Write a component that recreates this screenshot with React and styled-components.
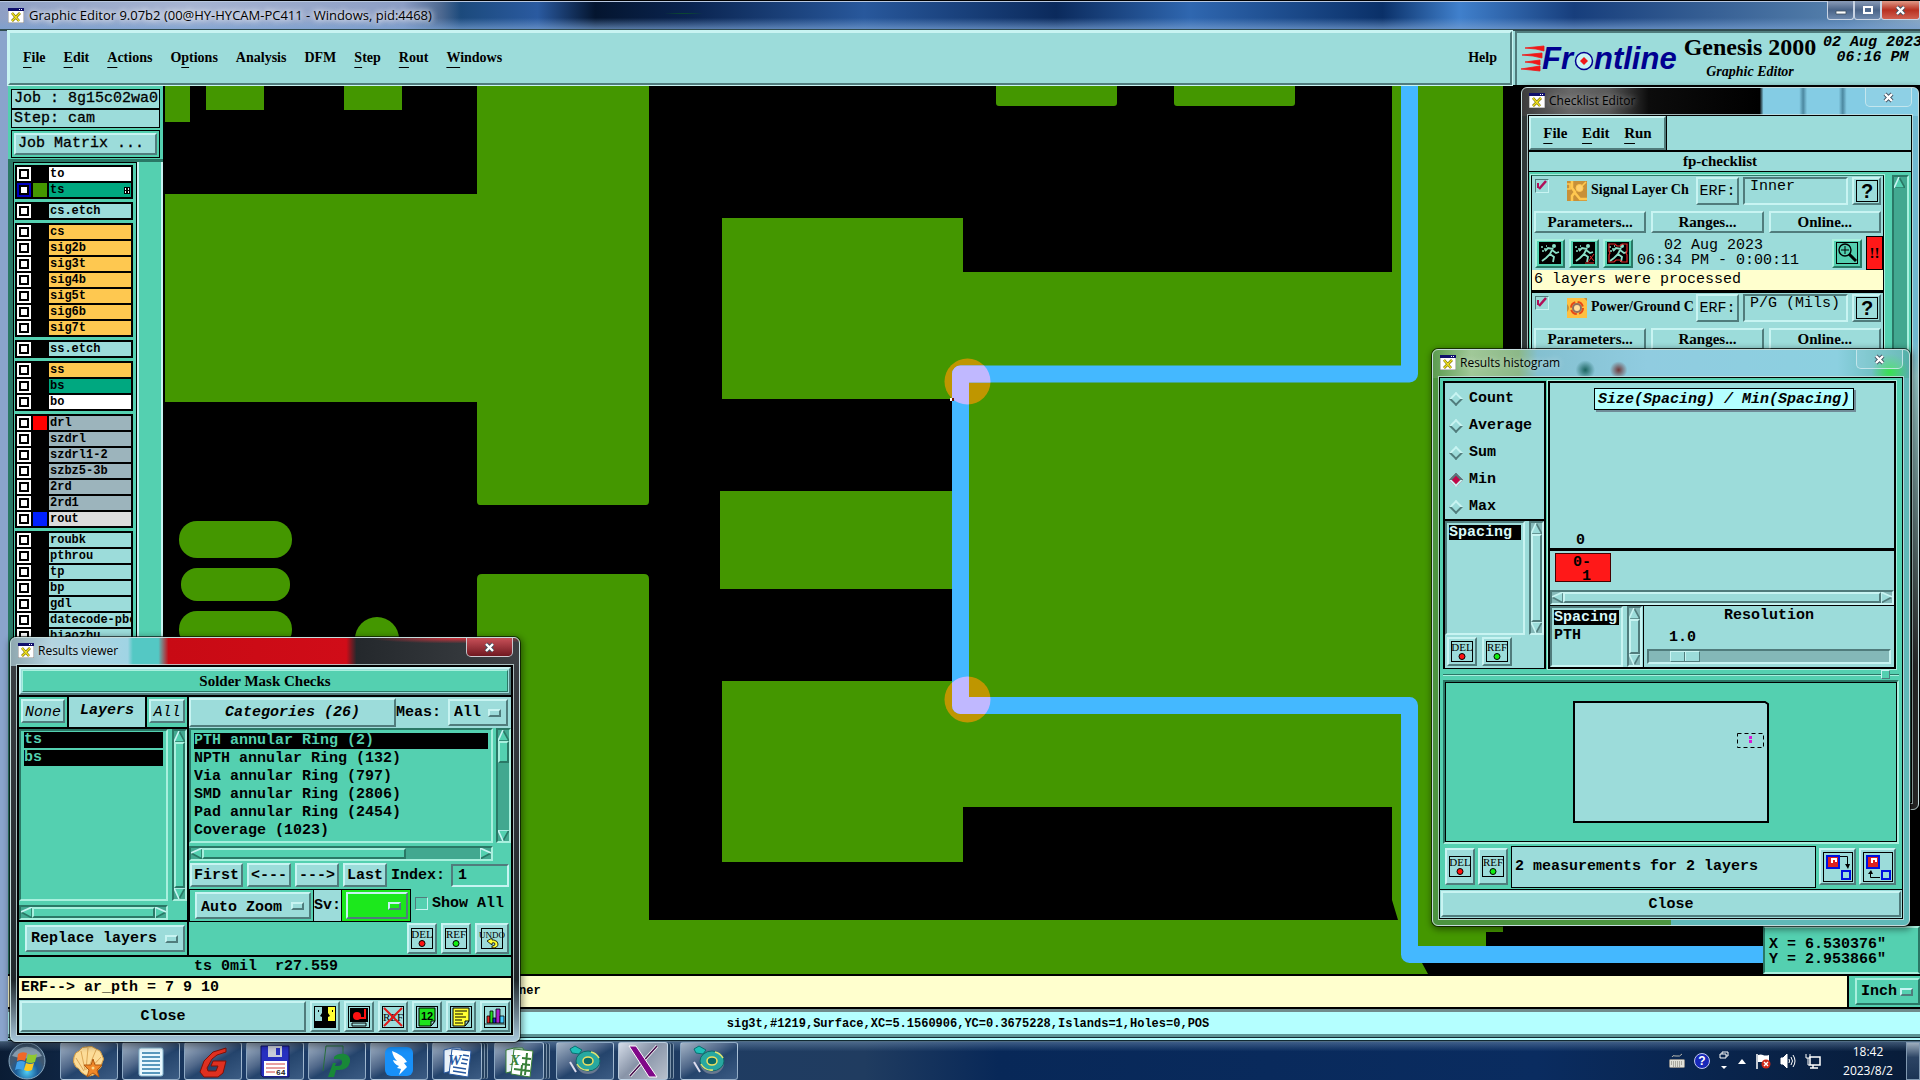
import { useState } from "react";
import styled, { createGlobalStyle, css } from "styled-components";

const GlobalStyle = createGlobalStyle`
  *,
  *::after {
    box-sizing: border-box;
  }

  body {
    margin: 0;
    color: #000;
    overflow: hidden;
    background: #000;
    font-family: "Liberation Mono", monospace;
    font-size: 15px;
  }

  button,
  input,
  select {
    margin: 0;
    padding: 0;
    color: inherit;
    font: inherit;
    border-radius: 0;
  }

  ul {
    margin: 0;
    padding: 0;
    list-style: none;
  }

  svg {
    display: block;
    flex: none;
  }
`;

const pale = "#9cdcda";
const teal = "#54d0b0";
const serif = `"Liberation Serif", serif`;
const ui = `"Open Sans", sans-serif`;

const raised = css`
  border: 2px solid;
  border-color: ${(p) =>
    p.$teal ? "#a8f0de #2a7866 #2a7866 #a8f0de" : "#c8f4f2 #507c7c #507c7c #c8f4f2"};
`;

const sunken = css`
  border: 2px solid;
  border-color: ${(p) =>
    p.$teal ? "#2a7866 #a8f0de #a8f0de #2a7866" : "#507c7c #c8f4f2 #c8f4f2 #507c7c"};
`;

/* ---------- page frame ---------- */

const Desktop = styled.div`
  height: 100vh;
  display: flex;
  flex-direction: column;
  position: relative;
  overflow: hidden;
`;

const MainTitle = styled.header`
  height: 31px;
  flex: none;
  display: flex;
  align-items: center;
  gap: 5px;
  padding-left: 8px;
  border-top: 1px solid #000;
  border-bottom: 2px solid #304c50;
  font: 13px ${ui};
  box-shadow: inset 0 1px #b8c8e0;
  background:
    radial-gradient(ellipse at 73% 50%, #6f2d5a 0, transparent 2%),
    radial-gradient(ellipse at 35.600% 45%, #0c5c20 0, transparent 1.200%),
    radial-gradient(ellipse at 39% 50%, #0c4c30 0, transparent 1.200%),
    linear-gradient(to bottom, transparent 60%, rgba(120, 160, 210, 0.7)),
    linear-gradient(
      to right,
      #8fa0c4 0,
      #a6b4d2 10%,
      #8b9dc4 21%,
      #4c6890 23%,
      #1c4a7c 24%,
      #2a5aa0 28%,
      #04152f 31%,
      #0a2450 36%,
      #28589c 45%,
      #0b2a5c 55%,
      #2f67b0 62%,
      #0a3068 72%,
      #4080cc 76%,
      #173e7c 82%,
      #5580ac 96%,
      #8aa8c0
    );
`;

const TitleText = styled.h1`
  margin: 0;
  flex: 1;
  font: inherit;
  text-shadow: 0 0 6px #fff, 0 0 6px #fff;
`;

const WinControls = styled.div`
  display: flex;
  align-self: flex-start;
`;

const WinControl = styled.button`
  width: ${(p) => (p.$close ? "39px" : "27px")};
  height: 19px;
  display: grid;
  place-items: center;
  border: 1px solid #c8d4e4;
  border-top: 0;
  border-radius: 0 0 3px 3px;
  background: ${(p) =>
    p.$close
      ? "linear-gradient(#e09a88, #b83020 50%, #d06050)"
      : "linear-gradient(#8a9cb8, #4a6488 50%, #6c88ac)"};
`;

const AppArea = styled.main`
  flex: 1;
  min-height: 0;
  display: flex;
  flex-direction: column;
  border-left: 8px solid #8aa4cc;
`;

const Header = styled.div`
  height: 55px;
  flex: none;
  display: flex;
  background: ${pale};
  border-bottom: 1px solid #000;
`;

const MenuBar = styled.nav`
  flex: 1;
  display: flex;
  align-items: center;
  gap: 18px;
  padding: 0 13px;
  font: bold 14px ${serif};
  border: 2px solid;
  border-color: #c8f4f2 #507c7c #507c7c #c8f4f2;
  box-shadow: 0 0 0 1px #c8f4f2;
`;

const MenuItem = styled.button`
  border: 0;
  background: none;
  margin-left: ${(p) => (p.$end ? "auto" : "0")};

  u {
    text-underline-offset: 5px;
  }
`;

const Brand = styled.div`
  width: 405px;
  flex: none;
  display: flex;
  margin-left: 3px;
  padding-left: 4px;
  overflow: hidden;
  border-top: 2px solid #507c7c;
  border-left: 2px solid #507c7c;
`;

const BrandName = styled.div`
  width: 138px;
  flex: none;
  text-align: center;
  white-space: nowrap;
`;

const Product = styled.div`
  font: bold 24px/28px ${serif};
`;

const ProductPart = styled.div`
  font: italic bold 14px/22px ${serif};
`;

const BrandDate = styled.div`
  flex: none;
  padding: 2px 0 0 4px;
  font-style: italic;
  font-weight: bold;
  line-height: 15px;
  text-align: center;
  white-space: nowrap;
`;

const Middle = styled.div`
  flex: 1;
  min-height: 0;
  display: flex;
`;

/* ---------- layer sidebar ---------- */

const Sidebar = styled.aside`
  width: 157px;
  flex: none;
  display: flex;
  flex-direction: column;
  padding: 3px 3px 0;
  background: ${teal};
  border-right: 2px solid #000;
  overflow: hidden;
`;

const JobLine = styled.div`
  height: ${(p) => (p.$gap ? "19px" : "20px")};
  flex: none;
  padding-left: 2px;
  line-height: 17px;
  white-space: nowrap;
  background: ${pale};
  border: 1px solid #000;
  -webkit-text-stroke: 0.3px #000;
`;

const MatrixBox = styled.div`
  flex: none;
  margin: 2px 0 1px;
  padding: 2px;
  border: 1px solid #000;
`;

const MatrixButton = styled.button`
  ${raised}
  width: 100%;
  height: 22px;
  padding-left: 2px;
  text-align: left;
  line-height: 16px;
  background: ${pale};
  -webkit-text-stroke: 0.3px #000;
`;

const LayerWell = styled.div`
  flex: 1;
  min-height: 0;
  display: flex;
  margin: 0 -3px;
  overflow: hidden;
  border-top: 3px solid #2a7866;
  border-left: 5px solid #2a7866;
`;

const LayerList = styled.div`
  width: 124px;
  flex: none;
  display: flex;
  flex-direction: column;
  gap: 3px;
  padding: 2px 3px 0 1px;
  border: 1px solid #000;
  border-bottom: 0;
`;

const LayerTrack = styled.div`
  flex: 1;
  border-left: 2px solid #c8f4f2;
  border-right: 2px solid #c8f4f2;
`;

const LayerGroup = styled.ul`
  flex: none;
  display: flex;
  flex-direction: column;
  gap: 2px;
  padding: 2px;
  background: #000;
`;

const LayerRow = styled.li`
  display: flex;
  gap: 2px;
  height: 14px;
`;

const LayerTick = styled.input`
  appearance: none;
  width: 14px;
  height: 14px;
  flex: none;
  border: 2px solid ${(p) => (p.$active ? "#0000c0" : "#fff")};
  background: #fff;
  box-shadow: inset 0 0 0 2px #000;
`;

const LayerSwatch = styled.span`
  width: 14px;
  flex: none;
  background: ${(p) => p.$color || "#000"};
`;

const LayerName = styled.label`
  flex: 1;
  padding-left: 1px;
  overflow: hidden;
  display: flex;
  justify-content: space-between;
  align-items: center;
  font-size: 12px;
  font-weight: bold;
  line-height: 14px;
  white-space: nowrap;
  background: ${(p) => p.$bg};
`;

/* ---------- drawing area ---------- */

const Canvas = styled.section`
  flex: 1;
  min-width: 0;
  position: relative;
  overflow: hidden;
  background: #000;
`;

const Coordinates = styled.div`
  position: absolute;
  right: 0;
  bottom: 0;
  width: 157px;
  padding: 9px 4px 5px;
  font-weight: bold;
  line-height: 15px;
  white-space: pre;
  background: ${teal};
  border: 2px solid;
  border-color: #a8f0de #2a7866 #a8f0de #2a7866;
`;

const PromptRow = styled.div`
  height: 35px;
  flex: none;
  display: flex;
  gap: 2px;
  background: #000;
  border-top: 2px solid #000;
  border-bottom: 2px solid #000;
`;

const Prompt = styled.div`
  flex: 1;
  padding-left: 511px;
  font-size: 12px;
  font-weight: bold;
  line-height: 31px;
  background: #ffffce;
`;

const UnitBox = styled.div`
  width: 71px;
  flex: none;
  padding: 2px 0 2px 6px;
  background: ${teal};
`;

const StatusLine = styled.footer`
  height: 32px;
  flex: none;
  padding-left: 8px;
  font-size: 12px;
  font-weight: bold;
  line-height: 25px;
  text-align: center;
  background: #b4ffff;
  border-top: 3px solid #708c8c;
  border-bottom: 4px double #102830;
  box-shadow: inset 0 -3px #5c9494;
`;

/* ---------- floating windows ---------- */

const Frame = styled.section`
  position: absolute;
  top: ${(p) => p.$top};
  left: ${(p) => p.$left};
  right: ${(p) => p.$right};
  width: ${(p) => p.$width};
  padding: 0 6px 6px;
  border: 1px solid #c4dcdc;
  border-radius: 6px;
  box-shadow: 0 0 0 1px rgba(0, 0, 0, 0.6), 1px 2px 6px 2px rgba(0, 0, 0, 0.4);
  background: ${(p) => p.$glass};
`;

const FrameTitle = styled.header`
  height: 27px;
  display: flex;
  align-items: center;
  gap: 4px;
  padding: 0 0 2px 1px;
  font: 12px ${ui};
`;

const FrameName = styled.h2`
  margin: 0;
  flex: 1;
  font: inherit;
  text-shadow: 0 0 6px rgba(255, 255, 255, 0.6);
`;

const FrameClose = styled.button`
  width: 47px;
  height: 19px;
  align-self: flex-start;
  display: grid;
  place-items: center;
  border: 1px solid rgba(210, 235, 240, 0.8);
  border-top: 0;
  border-radius: 0 0 5px 5px;
  background: ${(p) => (p.$hot ? "linear-gradient(#c85058, #701820)" : "rgba(170, 220, 230, 0.25)")};
`;

const FrameBody = styled.div`
  display: flex;
  flex-direction: column;
  gap: ${(p) => p.$gap || "0"};
  padding: ${(p) => p.$pad || "1px"};
  background: ${(p) => p.$bg || "#000"};
  border: 1px solid #000;
  outline: 1px solid rgba(200, 225, 225, 0.8);
`;

/* ---------- shared controls ---------- */

const PushButton = styled.button`
  ${raised}
  height: ${(p) => p.$h || "24px"};
  width: ${(p) => p.$w || "auto"};
  flex: ${(p) => (p.$grow ? "1" : "none")};
  overflow: hidden;
  white-space: nowrap;
  font-family: ${(p) => (p.$serif ? serif : "inherit")};
  font-weight: ${(p) => (p.$light ? "normal" : "bold")};
  font-style: ${(p) => (p.$italic ? "italic" : "normal")};
  background: ${pale};
`;

const IconButton = styled.button`
  ${raised}
  width: ${(p) => p.$w || "30px"};
  height: ${(p) => p.$h || "31px"};
  flex: none;
  display: grid;
  place-items: center;
  background: ${(p) => (p.$teal ? teal : pale)};
`;

const OptionBox = styled.div`
  ${raised}
  position: relative;
  width: ${(p) => p.$w || "auto"};
  height: ${(p) => p.$h || "27px"};
  background: ${(p) => p.$bg || pale};

  &::after {
    content: "";
    position: absolute;
    right: 5px;
    top: calc(50% - 4px);
    width: 13px;
    height: 8px;
    border: 2px solid;
    border-color: #c8f4f2 #507c7c #507c7c #c8f4f2;
    pointer-events: none;
  }
`;

const OptionSelect = styled.select`
  appearance: none;
  width: 100%;
  height: 100%;
  padding-left: 4px;
  font-weight: bold;
  border: 0;
  background: transparent;
`;

const Well = styled.div`
  ${sunken}
  flex: 1;
  min-width: 0;
  padding: ${(p) => p.$pad || "2px 3px"};
  overflow: hidden;
`;

const ListItem = styled.li`
  height: ${(p) => (p.$tight ? "15px" : "16px")};
  margin-bottom: ${(p) => (p.$tight ? "3px" : "2px")};
  font-weight: bold;
  line-height: 16px;
  white-space: nowrap;
  overflow: hidden;
  color: ${(p) => (p.$on ? (p.$teal ? teal : "#d8f8f8") : "#000")};
  background: ${(p) => (p.$on ? "#000" : "none")};
`;

const Bar = styled.div`
  ${sunken}
  flex: none;
  display: flex;
  flex-direction: ${(p) => (p.$horizontal ? "row" : "column")};
  width: ${(p) => (p.$horizontal ? "auto" : "15px")};
  height: ${(p) => (p.$horizontal ? "15px" : "auto")};
  background: ${(p) => (p.$teal ? "#42a890" : "#84b8b8")};
`;

const BarArrow = styled.button`
  width: 11px;
  height: 11px;
  flex: none;
  border: 0;
  background: none;
`;

const BarSpace = styled.div`
  flex: 1;
  display: flex;
  flex-direction: inherit;
`;

const BarThumb = styled.div`
  ${raised}
  flex: 0 0 ${(p) => p.$size};
  background: ${(p) => (p.$teal ? teal : pale)};
`;

const arrows = {
  up: ["M5 0L0 11H11Z", "M5 0L0 11", "M5 0L11 11H0"],
  down: ["M0 0H11L5 11Z", "M5 11L0 0H11", "M5 11L11 0"],
  left: ["M0 5L11 0V11Z", "M0 5L11 0", "M0 5L11 11V0"],
  right: ["M0 0L11 5L0 11Z", "M0 11V0L11 5", "M0 11L11 5"],
};

const Arrow = ({ dir, isTeal }) => (
  <BarArrow aria-label={dir}>
    <svg width="11" height="11" viewBox="0 0 11 11" fill="none" strokeWidth="1.6">
      <path d={arrows[dir][0]} fill={isTeal ? teal : pale} />
      <path d={arrows[dir][2]} stroke={isTeal ? "#2a7866" : "#507c7c"} />
      <path d={arrows[dir][1]} stroke="#c8f4f2" />
    </svg>
  </BarArrow>
);

const ScrollBar = ({ horizontal, isTeal, size = "100%" }) => (
  <Bar $horizontal={horizontal} $teal={isTeal}>
    <Arrow dir={horizontal ? "left" : "up"} isTeal={isTeal} />
    <BarSpace>
      <BarThumb $size={size} $teal={isTeal} />
    </BarSpace>
    <Arrow dir={horizontal ? "right" : "down"} isTeal={isTeal} />
  </Bar>
);

/* ---------- icons ---------- */

const XIcon = () => (
  <svg width="16" height="15" viewBox="0 0 16 15">
    <path d="M0 0h16v15H0z" fill="#fff" stroke="#888" />
    <path d="M0 0h16v3H0z" fill="#10106c" />
    <path d="M11 1h1v1h-1zM13 1h1v1h-1z" fill="#fff" />
    <path d="M4 5l7 8M12 5l-8 8" stroke="#706800" strokeWidth="2.6" />
    <path d="M4 5l7 8M12 5l-8 8" stroke="#f0e020" strokeWidth="1.4" />
  </svg>
);

const CrossGlyph = () => (
  <svg width="13" height="11" viewBox="0 0 13 11">
    <path d="M3 2l7 7M10 2l-7 7" stroke="#405060" strokeWidth="4" />
    <path d="M3 2l7 7M10 2l-7 7" stroke="#fff" strokeWidth="2.4" />
  </svg>
);

const TagIcon = ({ label, color, undo }) => (
  <svg width={undo ? 26 : 24} height="23" viewBox={undo ? "-1 0 26 23" : "0 0 24 23"}>
    <rect x="1.5" y="1.5" width="21" height="20" fill="none" stroke="#000" />
    <text
      x="12"
      y="11"
      textAnchor="middle"
      fontFamily="Liberation Serif"
      fontSize={undo ? 9 : 11}
    >
      {label}
    </text>
    {undo ? (
      <path
        d="M7 14l5-3v2h2q4 1 4 4 0 4-6 4v-2q3 0 3-2t-3-1v2z"
        fill="#ff3"
        stroke="#000"
        strokeWidth="0.8"
      />
    ) : (
      <circle cx="12" cy="16.5" r="3" fill={color} stroke="#000" />
    )}
  </svg>
);

const ToolFrame = ({ children }) => (
  <svg width="24" height="24" viewBox="0 0 24 24">
    {children}
    <rect x="1.5" y="1.5" width="21" height="21" fill="none" stroke="#000" />
  </svg>
);

const FacesIcon = () => (
  <ToolFrame>
    <path d="M12 2h10v20H12z" fill="#ff3" />
    <path d="M9 2h6v6l2 3-2 1v4h7v6H2v-6h7v-4l-2-1 2-3z" />
    <path d="M5 5h1v2H5zM19 5h1v2h-1z" />
  </ToolFrame>
);

const DiskIcon = () => (
  <ToolFrame>
    <path d="M3 3h18v14H3z" />
    <circle cx="10" cy="11" r="4" fill="#f11" />
    <path d="M10 13h8V4" fill="none" stroke="#f11" strokeWidth="2" />
    <path d="M5 18h14v3H5z" fill={pale} stroke="#000" />
  </ToolFrame>
);

const NoRefIcon = () => (
  <ToolFrame>
    <text x="12" y="16" textAnchor="middle" fontFamily="Liberation Serif" fontSize="11">
      REF
    </text>
    <path d="M3 3l18 18M21 3L3 21" stroke="#e01818" strokeWidth="2" />
  </ToolFrame>
);

const NumberIcon = () => (
  <ToolFrame>
    <path d="M4 3h16v13l-4 5H4z" fill="#1de41d" stroke="#000" />
    <path d="M20 16h-4v5z" fill={pale} stroke="#000" />
    <text x="12" y="15" textAnchor="middle" fontFamily="Liberation Sans" fontWeight="bold" fontSize="11">
      12
    </text>
  </ToolFrame>
);

const NoteIcon = () => (
  <ToolFrame>
    <path d="M4 3h16v13l-4 5H4z" fill="#ff3" stroke="#000" />
    <path d="M20 16h-4v5z" fill={pale} stroke="#000" />
    <path d="M6 6h12M6 9h8M6 12h11M6 15h7M6 18h8" stroke="#000" />
  </ToolFrame>
);

const ChartIcon = () => (
  <ToolFrame>
    <g stroke="#000" strokeWidth="0.8">
      <path d="M4 11h3v7H4z" fill="#e22" />
      <path d="M7 6h3v12H7z" fill="#2d2" />
      <path d="M10 13h3v5h-3z" fill="#22d" />
      <path d="M13 4h4v14h-4z" fill="#a2c" />
      <path d="M17 11h4v7h-4z" fill="#4cf" />
      <path d="M2 19h20" />
    </g>
  </ToolFrame>
);

const RunnerIcon = ({ slash, boxed }) => (
  <svg width="24" height="24" viewBox="0 0 24 24" fill="none">
    <path d="M1 1h22v22H1z" fill="#000" />
    <circle cx="16" cy="5" r="2" fill="#8ae0c8" />
    <path
      d="M15 7l-3 6 4 3-1 5M12 13l-4 4-4 3M15 8l-5-1-3 3M14 9l4 3 3-1"
      stroke="#8ae0c8"
      strokeWidth="1.8"
    />
    <path d="M3 6h2M6 8h2M4 10h2M8 5h1" stroke="#8ae0c8" strokeWidth="1.4" />
    {slash && <path d="M22 13l-6 8M18 15l4 5M13 22h9" stroke="#e02828" />}
    {boxed && (
      <path d="M3 3h6l2 2h3l2-2h5v7l-1 2 1 2v7h-5l-2-2h-4l-2 2H3v-7l1-2-1-2z" stroke="#e02828" strokeWidth="1.2" />
    )}
  </svg>
);

const LensIcon = () => (
  <svg width="24" height="24" viewBox="0 0 24 24" fill="none" stroke="#000">
    <rect x="1.5" y="1.5" width="21" height="21" />
    <circle cx="10" cy="9" r="6" strokeWidth="1.4" />
    <path d="M6 9h8M10 5v8" />
    <path d="M14 13l7 7" strokeWidth="3" />
  </svg>
);

const HelpMark = () => (
  <svg width="24" height="24" viewBox="0 0 24 24">
    <rect x="1.5" y="1.5" width="21" height="21" fill="none" stroke="#000" />
    <text x="12" y="19" textAnchor="middle" fontFamily="Liberation Sans" fontWeight="bold" fontSize="20">
      ?
    </text>
  </svg>
);

const SignalIcon = () => (
  <svg width="20" height="20" viewBox="0 0 20 20" fill="none" stroke="#ffc850">
    <path d="M0 0h20v20H0z" fill="#c89038" stroke="none" />
    <path d="M5 0v7l3 4-3 4v5M20 18H13l-5-6" strokeWidth="2.5" />
    <circle cx="12.5" cy="7" r="3.5" fill="#ffd070" />
    <path d="M15 5l4-4M0 3h3v5H0" strokeWidth="1.6" />
  </svg>
);

const PowerIcon = () => (
  <svg width="20" height="20" viewBox="0 0 20 20" fill="none">
    <path d="M0 0h20v20H0z" fill="#ffc040" />
    <circle cx="10" cy="10" r="6" stroke="#e84818" strokeWidth="2" strokeDasharray="7 2.4" />
    <circle cx="10" cy="10" r="4" fill="#ffe0a0" stroke="#907060" strokeWidth="2" />
    <path d="M0 6q4 4 0 8zM20 0h-3l3 3z" fill="#c89038" />
  </svg>
);

const SwapIcon = ({ back }) => (
  <svg width="32" height="32" viewBox="0 0 32 32" fill="none">
    <rect x="1.5" y="1.5" width="29" height="29" stroke="#000" />
    <rect x="5" y="5" width="12" height="12" fill="#e02020" stroke="#0010e0" strokeWidth="2" />
    <path d="M7 7h2v5h2V9h2v2h2V7z" fill="#fff" />
    <rect x="20" y="20" width="8" height="8" stroke="#0010e0" strokeWidth="2" />
    {back ? (
      <path d="M18 26.5H8.5V22" stroke="#000" />
    ) : (
      <path d="M18 5.5h7.5V14" stroke="#000" />
    )}
    <path d={back ? "M6 23h5l-2-4z" : "M23 13h5l-2 5z"} fill="#000" />
  </svg>
);

const Logo = () => (
  <svg width="160" height="50" viewBox="0 0 160 50">
    <path
      d="M4 15L23 13V18L15 16zM1 22L21 20V25L12 23zM4 29L19 27V32L12 30zM0 36L19 33V38L10 37z"
      fill="#f01818"
      stroke="#f01818"
      strokeWidth="0.8"
    />
    <g
      fill="#000090"
      fontFamily="Liberation Sans"
      fontWeight="bold"
      fontStyle="italic"
      fontSize="31"
    >
      <text x="21" y="36">
        Fr
      </text>
      <text x="73" y="36">
        ntline
      </text>
    </g>
    <circle cx="63" cy="28" r="8.5" fill="#c8f4f2" stroke="#000090" strokeWidth="1.5" />
    <path d="M63 24l4 4-4 4-4-4z" fill="#f01818" />
  </svg>
);

/* ---------- board drawing ---------- */

const tracePath = "M1409.5 80V374H960.5V705.5H1409.5V954.5H1780";

const Board = () => (
  <svg width="100%" height="100%" aria-label="Board layout">
    <defs>
      <clipPath id="marks">
        <circle cx="967.5" cy="381.5" r="23" />
        <circle cx="967.5" cy="699.5" r="23" />
      </clipPath>
    </defs>
    <g transform="translate(-165 -86)">
      <g fill="#449700">
        <path d="M165 86h25v36h-25zM206 86h58v24h-58zM344 86h58v24h-58z" />
        <path d="M165 194h312V86h172v415q0 4-3 4H480q-3 0-3-4V402H165z" />
        <path d="M477 579q0-5 5-5h162q5 0 5 5v341h749l-6-20V807H963v55H722V681h230v-92H720v-98h232v-92H722V218h241v54h429V86h111v846h-17v14h-64v17l6 11H477z" />
        <path d="M996 86h121v17q0 3-3 3H999q-3 0-3-3zM1174 86h121v17q0 3-3 3h-115q-3 0-3-3z" />
        <rect x="179" y="521" width="113" height="37" rx="18" />
        <rect x="181" y="568" width="109" height="33" rx="16" />
        <rect x="179" y="611" width="113" height="37" rx="18" />
        <circle cx="377" cy="639" r="22" />
      </g>
      <circle cx="967.5" cy="381.5" r="23" fill="#bf9600" />
      <circle cx="967.5" cy="699.5" r="23" fill="#bf9600" />
      <g fill="none" strokeWidth="17" strokeLinejoin="round">
        <path d={tracePath} stroke="#44b8ff" />
        <path d={tracePath} stroke="#c0b8ff" clipPath="url(#marks)" />
      </g>
      <path d="M950 398h2v3h-2z" fill="#fff" />
      <path d="M952 398h2v3h-2z" fill="#701800" />
    </g>
  </svg>
);

/* ---------- results viewer ---------- */

const Banner = styled.div`
  ${raised}
  height: 28px;
  padding: 1px;
  background: ${pale};

  h3 {
    margin: 0;
    height: 100%;
    font: bold 15px/20px ${serif};
    text-align: center;
    background: ${teal};
    border: 1px solid;
    border-color: #a8f0de #2a7866 #2a7866 #a8f0de;
  }
`;

const Split = styled.div`
  display: flex;
  gap: 2px;
  height: 258px;
`;

const LayerColumn = styled.div`
  width: 168px;
  flex: none;
  display: flex;
  flex-direction: column;
  gap: 2px;
`;

const TabStrip = styled.div`
  display: flex;
  gap: 2px;
`;

const TabCell = styled.div`
  flex: ${(p) => (p.$grow ? "1" : "none")};
  padding: 2px;
  background: ${(p) => (p.$grow ? pale : teal)};
  font-weight: bold;
  font-style: italic;
  line-height: 24px;
  text-align: center;
`;

const ListPane = styled.div`
  flex: 1;
  min-height: 0;
  display: grid;
  grid-template-columns: minmax(0, 1fr) 15px;
  grid-template-rows: minmax(0, 1fr) 15px;
  gap: 4px;
  background: ${teal};
`;

const ReplaceBox = styled.div`
  padding: 3px 2px 3px 6px;
  background: ${teal};
`;

const CategoryColumn = styled.div`
  flex: 1;
  min-width: 0;
  display: flex;
  flex-direction: column;
  background: ${teal};
`;

const CategoryHead = styled.div`
  height: 31px;
  display: flex;
  align-items: center;
  font-weight: bold;
  background: ${pale};
`;

const HeadLabel = styled.label`
  width: 52px;
`;

const CategoryPane = styled(ListPane)`
  flex: none;
  height: 133px;
  gap: 3px;
`;

const NavRow = styled.div`
  height: 28px;
  display: flex;
  align-items: center;
  gap: 4px;
  padding: 0 2px 0 1px;
  font-weight: bold;
`;

const IndexInput = styled.input`
  ${sunken}
  flex: 1;
  min-width: 0;
  height: 23px;
  margin-left: 2px;
  padding-left: 5px;
  background: ${teal};
`;

const ZoomRow = styled.div`
  display: flex;
  align-items: center;
  gap: 4px;
  font-weight: bold;
`;

const ZoomBox = styled.div`
  display: flex;
  gap: 1px;
  border: 1px solid #000;
  background: #000;
`;

const ZoomCell = styled.div`
  padding: ${(p) => p.$pad || "2px"};
  line-height: 27px;
  background: ${(p) => p.$bg};
`;

const ShowAll = styled.label`
  display: flex;
  align-items: center;
  gap: 4px;
  margin-bottom: 4px;

  input {
    ${sunken}
    appearance: none;
    width: 13px;
    height: 13px;
    border-width: 1px;
    background: ${teal};
  }
`;

const ToolRow = styled.div`
  flex: 1;
  display: flex;
  justify-content: flex-end;
  align-items: center;
  gap: 4px;
  padding-right: 2px;
`;

const InfoLine = styled.div`
  height: ${(p) => (p.$warm ? "20px" : "19px")};
  padding-left: 2px;
  font-weight: ${(p) => (p.$light ? "normal" : "bold")};
  line-height: 19px;
  text-align: ${(p) => (p.$warm ? "left" : "center")};
  white-space: pre;
  background: ${(p) => (p.$warm ? "#ffffce" : teal)};
`;

const CloseRow = styled.div`
  display: flex;
  gap: 4px;
  padding: 1px;
  background: ${pale};
`;

const categories = [
  "PTH annular Ring (2)",
  "NPTH annular Ring (132)",
  "Via annular Ring (797)",
  "SMD annular Ring (2806)",
  "Pad annular Ring (2454)",
  "Coverage (1023)",
];

const viewerGlass = `
  radial-gradient(ellipse at 88% 0, rgba(230, 50, 60, 0.9) 0, transparent 14%) 0 0 / 100% 28px no-repeat,
  linear-gradient(to right, #8fa8b0 0, #b4d4e0 8%, #a0d4e4 23%, #54c8c4 24%, #54c8c4 29%, #c80a14 31%, #d00c18 66%, #24282c 68%, #3c4044 100%) 0 0 / 100% 28px no-repeat,
  linear-gradient(#3c4044, #20282c 85%, #a8c8dc)
`;

const ResultsViewer = () => {
  const [selected, setSelected] = useState(0);

  return (
    <Frame $top="637px" $left="10px" $width="510px" $glass={viewerGlass}>
      <FrameTitle>
        <XIcon />
        <FrameName>Results viewer</FrameName>
        <FrameClose $hot aria-label="Close window">
          <CrossGlyph />
        </FrameClose>
      </FrameTitle>
      <FrameBody $gap="2px">
        <Banner>
          <h3>Solder Mask Checks</h3>
        </Banner>
        <Split>
          <LayerColumn>
            <TabStrip>
              <TabCell>
                <PushButton $italic $light $w="44px">
                  None
                </PushButton>
              </TabCell>
              <TabCell $grow>Layers</TabCell>
              <TabCell>
                <PushButton $italic $light $w="36px">
                  All
                </PushButton>
              </TabCell>
            </TabStrip>
            <ListPane>
              <Well $teal $pad="1px 3px">
                <ul>
                  <ListItem $on $teal>ts</ListItem>
                  <ListItem $on $teal>bs</ListItem>
                </ul>
              </Well>
              <ScrollBar isTeal />
              <ScrollBar horizontal isTeal />
            </ListPane>
            <ReplaceBox>
              <OptionBox>
                <OptionSelect aria-label="Layer mode">
                  <option>Replace layers</option>
                </OptionSelect>
              </OptionBox>
            </ReplaceBox>
          </LayerColumn>
          <CategoryColumn>
            <CategoryHead>
              <PushButton $italic $w="207px" $h="29px">
                Categories (26)
              </PushButton>
              <HeadLabel htmlFor="meas">Meas:</HeadLabel>
              <OptionBox $w="60px">
                <OptionSelect id="meas">
                  <option>All</option>
                </OptionSelect>
              </OptionBox>
            </CategoryHead>
            <CategoryPane>
              <Well $teal $pad="3px">
                <ul>
                  {categories.map((name, index) => (
                    <ListItem
                      key={name}
                      $teal
                      $on={index === selected}
                      onClick={() => setSelected(index)}
                    >
                      {name}
                    </ListItem>
                  ))}
                </ul>
              </Well>
              <ScrollBar isTeal size="22px" />
              <ScrollBar horizontal isTeal size="204px" />
            </CategoryPane>
            <NavRow>
              <PushButton $w="53px">First</PushButton>
              <PushButton $w="44px">&lt;---</PushButton>
              <PushButton $w="44px">---&gt;</PushButton>
              <PushButton $w="44px">Last</PushButton>
              <label htmlFor="index">Index:</label>
              <IndexInput id="index" defaultValue="1" />
            </NavRow>
            <ZoomRow>
              <ZoomBox>
                <ZoomCell $bg={teal} $pad="2px 2px 2px 5px">
                  <OptionBox $w="116px">
                    <OptionSelect aria-label="Zoom mode">
                      <option>Auto Zoom</option>
                    </OptionSelect>
                  </OptionBox>
                </ZoomCell>
                <ZoomCell $bg={pale} $pad="2px 0">
                  <label htmlFor="sv">Sv:</label>
                </ZoomCell>
                <ZoomCell $bg="#1ce81c" $pad="2px 2px 2px 4px">
                  <OptionBox $w="62px" $bg="#1ce81c">
                    <OptionSelect id="sv">
                      <option aria-label="green" />
                    </OptionSelect>
                  </OptionBox>
                </ZoomCell>
              </ZoomBox>
              <ShowAll>
                <input type="checkbox" />
                Show All
              </ShowAll>
            </ZoomRow>
            <ToolRow>
              <IconButton>
                <TagIcon label="DEL" color="#f11" />
              </IconButton>
              <IconButton>
                <TagIcon label="REF" color="#1e1" />
              </IconButton>
              <IconButton $w="34px">
                <TagIcon label="UNDO" undo />
              </IconButton>
            </ToolRow>
          </CategoryColumn>
        </Split>
        <InfoLine>{"ts 0mil  r27.559"}</InfoLine>
        <InfoLine $warm>{"ERF--> ar_pth = 7 9 10"}</InfoLine>
        <CloseRow>
          <PushButton $grow $h="31px">
            Close
          </PushButton>
          {[FacesIcon, DiskIcon, NoRefIcon, NumberIcon, NoteIcon, ChartIcon].map((Icon, index) => (
            <IconButton key={index}>
              <Icon />
            </IconButton>
          ))}
        </CloseRow>
      </FrameBody>
    </Frame>
  );
};

/* ---------- checklist editor ---------- */

const ChecklistMenu = styled.nav`
  height: 36px;
  border-bottom: 2px solid #000;
`;

const ChecklistMenuBox = styled.div`
  ${raised}
  width: 137px;
  height: 34px;
  display: flex;
  align-items: center;
  justify-content: space-around;
  padding: 0 5px;
  font: bold 15px ${serif};
  box-shadow: 1px 0 #000;
`;

const ChecklistName = styled.h3`
  margin: 0;
  height: 20px;
  font: bold 15px/18px ${serif};
  text-align: center;
  border-bottom: 1px solid #000;
`;

const ChecklistPane = styled.div`
  height: 630px;
  display: flex;
  gap: 8px;
  padding: 3px 2px 0;
  background: ${teal};
`;

const Entries = styled.div`
  flex: 1;
  min-width: 0;
  background: ${pale};
  border: 1px solid #000;
  border-top-color: #2a7866;
  outline: 1px solid #a8f0de;
`;

const Entry = styled.article`
  display: flex;
  flex-direction: column;
  border-bottom: 3px solid #000;
`;

const EntryHead = styled.div`
  height: 33px;
  display: flex;
  align-items: flex-start;
  gap: 4px;
  padding: 1px 2px 0 3px;
`;

const EntryTick = styled.input`
  ${sunken}
  appearance: none;
  width: 14px;
  height: 14px;
  border-width: 1px;
`;

const TickBox = styled.label`
  position: relative;
  display: flex;
  margin: 2px 14px 0 0;

  svg {
    position: absolute;
    left: 2px;
    top: 1px;
    pointer-events: none;
  }
`;

const EntryIcon = styled.span`
  margin-top: 4px;
`;

const EntryName = styled.div`
  width: 101px;
  flex: none;
  margin-top: 2px;
  font: bold 14px/22px ${serif};
  white-space: nowrap;
`;

const EntryInput = styled.input`
  ${sunken}
  flex: 1;
  min-width: 0;
  height: 28px;
  padding: 0 0 10px 5px;
  background: ${pale};
`;

const EntryButtons = styled.div`
  display: grid;
  grid-template-columns: 1fr 1fr 1fr;
  gap: 5px;
  padding: 2px 2px 3px;
  font-size: 15px;
`;

const RunRow = styled.div`
  height: 34px;
  display: flex;
  align-items: center;
  gap: 4px;
  padding-left: 3px;
`;

const RunTime = styled.div`
  flex: 1;
  line-height: 15px;
  text-align: left;
  white-space: pre;
`;

const Alert = styled.button`
  width: 17px;
  height: 34px;
  flex: none;
  border: 1px solid #000;
  background: #ff1818;
  font: bold 15px ${serif};
`;

const SideBar = styled.div`
  display: flex;
  width: 17px;
  border-left: 2px solid #2a7866;
  border-top: 2px solid #2a7866;
  border-right: 2px solid #a8f0de;
  background: #42a890;
`;

const ChecklistEntry = ({ name, erf, icon, children }) => (
  <Entry>
    <EntryHead>
      <TickBox>
        <EntryTick type="checkbox" defaultChecked aria-label={name} />
        <svg width="11" height="10" viewBox="0 0 11 10" fill="none" stroke="#b01058">
          <path d="M1 3v5" strokeWidth="2" />
          <path d="M2 9l7-8" strokeWidth="2.5" />
        </svg>
      </TickBox>
      <EntryIcon>{icon}</EntryIcon>
      <EntryName>{name}</EntryName>
      <PushButton $light $w="43px" $h="28px">
        ERF:
      </PushButton>
      <EntryInput aria-label={`${name} ERF`} defaultValue={erf} />
      <IconButton $w="29px" $h="28px">
        <HelpMark />
      </IconButton>
    </EntryHead>
    <EntryButtons>
      <PushButton $serif $h="22px">Parameters...</PushButton>
      <PushButton $serif $h="22px">Ranges...</PushButton>
      <PushButton $serif $h="22px">Online...</PushButton>
    </EntryButtons>
    {children}
  </Entry>
);

const checklistGlass = `
  linear-gradient(to right, #3c3c3c 0, #686868 12%, #585858 22%, #0c0c0c 32%, #000 60%, #84cce4 61%, #84cce4 70%, #4c88a0 71%, #84cce4 72%, #84cce4 80%, #4c88a0 81%, #84cce4 82%) 0 0 / 100% 28px no-repeat,
  linear-gradient(to right, #303838 50%, transparent 50%),
  linear-gradient(#70b8d0 0, #70b8d0 35%, #90c0c0 40%, #282828 80%)
`;

const ChecklistEditor = () => (
  <Frame $top="87px" $right="1px" $width="398px" $glass={checklistGlass}>
    <FrameTitle>
      <XIcon />
      <FrameName>Checklist Editor</FrameName>
      <FrameClose aria-label="Close window">
        <CrossGlyph />
      </FrameClose>
    </FrameTitle>
    <FrameBody $bg={pale} $pad="0">
      <ChecklistMenu>
        <ChecklistMenuBox>
          <MenuItem><u>F</u>ile</MenuItem>
          <MenuItem><u>E</u>dit</MenuItem>
          <MenuItem><u>R</u>un</MenuItem>
        </ChecklistMenuBox>
      </ChecklistMenu>
      <ChecklistName>fp-checklist</ChecklistName>
      <ChecklistPane>
        <Entries>
          <ChecklistEntry name="Signal Layer Ch" erf="Inner" icon={<SignalIcon />}>
            <RunRow>
              <IconButton $teal $h="29px" aria-label="Run">
                <RunnerIcon />
              </IconButton>
              <IconButton $teal $h="29px" aria-label="Run local">
                <RunnerIcon slash />
              </IconButton>
              <IconButton $teal $h="29px" aria-label="Run all">
                <RunnerIcon boxed />
              </IconButton>
              <RunTime>{"   02 Aug 2023\n06:34 PM - 0:00:11"}</RunTime>
              <IconButton $teal $h="29px" aria-label="Results">
                <LensIcon />
              </IconButton>
              <Alert>!!</Alert>
            </RunRow>
            <InfoLine $warm $light>
              6 layers were processed
            </InfoLine>
          </ChecklistEntry>
          <ChecklistEntry name="Power/Ground C" erf="P/G (Mils)" icon={<PowerIcon />} />
        </Entries>
        <SideBar>
          <Arrow dir="up" isTeal />
        </SideBar>
      </ChecklistPane>
    </FrameBody>
  </Frame>
);

/* ---------- histogram ---------- */

const HistTop = styled.div`
  height: 288px;
  display: flex;
  gap: 2px;
  padding-right: 3px;
`;

const MeasureColumn = styled.div`
  width: 103px;
  flex: none;
  display: flex;
  flex-direction: column;
  background: ${pale};
  border: 2px solid #000;
  border-bottom-width: 1px;
`;

const RadioList = styled.fieldset`
  height: 138px;
  margin: 0;
  padding: 2px 0 0 6px;
  border: 0;
  border-bottom: 2px solid #000;
  font-weight: bold;
`;

const RadioLabel = styled.label`
  height: 27px;
  display: flex;
  align-items: center;
  gap: 8px;
`;

const Diamond = styled.input`
  appearance: none;
  width: 10px;
  height: 10px;
  border: 2px solid;
  border-color: #c8f4f2 #507c7c #507c7c #c8f4f2;
  transform: rotate(45deg);

  &:checked {
    background: #c00848;
    border-color: #507c7c #c8f4f2 #c8f4f2 #507c7c;
  }
`;

const SpacingPane = styled.div`
  flex: 1;
  min-height: 0;
  display: flex;
  gap: 4px;
`;

const ColumnTools = styled.div`
  display: flex;
  gap: 5px;
  padding: 2px;
`;

const ChartColumn = styled.div`
  flex: 1;
  min-width: 0;
  display: flex;
  flex-direction: column;
  background: ${pale};
  border: 2px solid #000;
  outline: 1px solid #a8f0de;
`;

const Plot = styled.div`
  height: 168px;
  display: flex;
  flex-direction: column;
  justify-content: space-between;
  align-items: center;
  padding-top: 5px;
  border-bottom: 3px solid #000;
`;

const PlotTitle = styled.h3`
  margin: 0 0 0 4px;
  height: 22px;
  padding: 2px 3px;
  font-size: 15px;
  font-style: italic;
  line-height: 18px;
  white-space: nowrap;
  background: #b4ffff;
  border: 1px solid #000;
  box-shadow: 2px 2px #708c98;
`;

const BinCount = styled.span`
  align-self: flex-start;
  margin-left: 26px;
  font-weight: bold;
  line-height: 15px;
`;

const Bins = styled.div`
  flex: 1;
  padding: 2px 5px;
`;

const Bin = styled.div`
  width: 56px;
  height: 29px;
  padding: 2px 0 0 17px;
  font-weight: bold;
  line-height: 14px;
  white-space: pre;
  background: #ff1818;
  border: 1px solid #400;
`;

const ChartFoot = styled.div`
  height: 62px;
  display: flex;
  gap: 4px;
  border-top: 1px solid #000;
`;

const FootList = styled.div`
  width: 73px;
  flex: none;
  display: flex;
`;

const ResolutionBox = styled.div`
  flex: 1;
  display: flex;
  flex-direction: column;
  margin-left: -3px;
  padding: 1px 3px 0;
  border-left: 1px solid #000;
  font-weight: bold;
  text-align: center;
`;

const ResolutionValue = styled.output`
  padding: 5px 0 3px 22px;
  text-align: left;
  line-height: 17px;
`;

const ResolutionSlider = styled.input`
  ${sunken}
  appearance: none;
  width: 100%;
  height: 15px;
  background: #84b8b8;

  &::-webkit-slider-thumb {
    appearance: none;
    width: 30px;
    height: 11px;
    border: 1px solid;
    border-color: #c8f4f2 #507c7c #507c7c #c8f4f2;
    background: linear-gradient(to right, ${pale} 13px, #507c7c 13px, #507c7c 14px, #c8f4f2 14px, #c8f4f2 15px, ${pale} 15px);
  }
`;

const Sash = styled.div`
  height: 11px;
  display: flex;
  justify-content: flex-end;
  align-items: center;
  padding-right: 9px;
  background: linear-gradient(transparent 5px, #2a7866 5px, #2a7866 6px, #a8f0de 6px, #a8f0de 7px, transparent 7px);
`;

const SashGrip = styled.button`
  ${raised}
  width: 9px;
  height: 9px;
  border-width: 1px;
  background: ${teal};
`;

const BoardMap = styled.div`
  height: 164px;
  display: grid;
  place-items: center;
  border: 2px solid;
  border-color: #2a7866 #a8f0de #a8f0de #2a7866;
  outline: 1px solid #000;
  outline-offset: -3px;
`;

const MapFoot = styled.div`
  height: 45px;
  display: flex;
  align-items: center;
  gap: 3px;
  padding: 0 3px 0 2px;
`;

const Summary = styled.div`
  flex: 1;
  height: 42px;
  padding-left: 3px;
  font-weight: bold;
  line-height: 40px;
  background: ${pale};
  border: 1px solid #000;
`;

const HistClose = styled.div`
  display: flex;
  margin: 0 -3px -3px;
  padding: 1px;
  background: ${pale};
  border-top: 1px solid #000;
`;

const histGlass = `
  radial-gradient(circle at 96% 22px, #38e050 0, transparent 4%) 0 0 / 100% 28px no-repeat,
  radial-gradient(circle at 32% 20px, #1c6460 0, transparent 3%) 0 0 / 100% 28px no-repeat,
  radial-gradient(circle at 39% 20px, #703838 0, transparent 3%) 0 0 / 100% 28px no-repeat,
  linear-gradient(to right, #5c9c50 0, #a0c898 8%, #8cb888 18%, #84c0d0 22%, #90cce0 45%, #8cd0e0 85%, #54b0a8) 0 0 / 100% 28px no-repeat,
  linear-gradient(to right, #4c9440 50%, #60b8b8 50%)
`;

const measures = ["Count", "Average", "Sum", "Min", "Max"];

const ResultsHistogram = () => {
  const [measure, setMeasure] = useState("Min");
  const [resolution, setResolution] = useState(1);

  return (
    <Frame $top="349px" $right="10px" $width="478px" $glass={histGlass}>
      <FrameTitle>
        <XIcon />
        <FrameName>Results histogram</FrameName>
        <FrameClose aria-label="Close window">
          <CrossGlyph />
        </FrameClose>
      </FrameTitle>
      <FrameBody $bg={teal} $pad="3px">
        <HistTop>
          <MeasureColumn>
            <RadioList aria-label="Measure">
              {measures.map((name) => (
                <RadioLabel key={name}>
                  <Diamond
                    type="radio"
                    name="measure"
                    checked={name === measure}
                    onChange={() => setMeasure(name)}
                  />
                  {name}
                </RadioLabel>
              ))}
            </RadioList>
            <SpacingPane>
              <Well $pad="2px">
                <ul>
                  <ListItem $on $tight>Spacing</ListItem>
                </ul>
              </Well>
              <ScrollBar />
            </SpacingPane>
            <ColumnTools>
              <IconButton $h="29px">
                <TagIcon label="DEL" color="#f11" />
              </IconButton>
              <IconButton $h="29px">
                <TagIcon label="REF" color="#1e1" />
              </IconButton>
            </ColumnTools>
          </MeasureColumn>
          <ChartColumn>
            <Plot>
              <PlotTitle>Size(Spacing) / Min(Spacing)</PlotTitle>
              <BinCount>0</BinCount>
            </Plot>
            <Bins>
              <Bin>{"0-\n 1"}</Bin>
            </Bins>
            <ScrollBar horizontal />
            <ChartFoot>
              <FootList>
                <Well $pad="2px">
                  <ul>
                    <ListItem $on $tight>Spacing</ListItem>
                    <ListItem $tight>PTH</ListItem>
                  </ul>
                </Well>
              </FootList>
              <ScrollBar />
              <ResolutionBox>
                <label htmlFor="resolution">Resolution</label>
                <ResolutionValue>{resolution.toFixed(1)}</ResolutionValue>
                <ResolutionSlider
                  id="resolution"
                  type="range"
                  min="0"
                  max="10"
                  value={resolution}
                  onChange={(e) => setResolution(Number(e.target.value))}
                />
              </ResolutionBox>
            </ChartFoot>
          </ChartColumn>
        </HistTop>
        <Sash>
          <SashGrip aria-label="Resize panes" />
        </Sash>
        <BoardMap>
          <svg width="198" height="124" viewBox="0 0 198 124">
            <path d="M2 2h191l3 2v118H2z" fill={pale} stroke="#000" strokeWidth="2" />
            <rect x="165.5" y="33.5" width="26" height="14" fill="none" stroke="#000" strokeDasharray="4 3" />
            <path d="M177 36h3v3h-3zM177 40h3v3h-3z" fill="#d818d8" />
          </svg>
        </BoardMap>
        <MapFoot>
          <IconButton $h="37px">
            <TagIcon label="DEL" color="#f11" />
          </IconButton>
          <IconButton $h="37px">
            <TagIcon label="REF" color="#1e1" />
          </IconButton>
          <Summary>2 measurements for 2 layers</Summary>
          <IconButton $w="37px" $h="37px" aria-label="Copy to">
            <SwapIcon />
          </IconButton>
          <IconButton $w="37px" $h="37px" aria-label="Copy back">
            <SwapIcon back />
          </IconButton>
        </MapFoot>
        <HistClose>
          <PushButton $grow $h="26px">
            Close
          </PushButton>
        </HistClose>
      </FrameBody>
    </Frame>
  );
};

/* ---------- taskbar ---------- */

const Taskbar = styled.footer`
  height: 39px;
  flex: none;
  display: flex;
  align-items: center;
  gap: 4px;
  padding-left: 8px;
  color: #fff;
  border-top: 1px solid #506c84;
  background: linear-gradient(to bottom, rgba(140, 170, 200, 0.4), transparent 25%),
    linear-gradient(to right, #0a1c34, #1c3c68 12%, #203c60 45%, #082858 52%, #0a2c60 80%, #081c38);
`;

const StartButton = styled.button`
  width: 48px;
  padding: 0;
  border: 0;
  background: none;
`;

const TaskButton = styled.button`
  width: ${(p) => p.$w || "58px"};
  height: 38px;
  display: grid;
  place-items: center;
  border: 1px solid rgba(190, 215, 235, 0.65);
  border-radius: 3px;
  box-shadow: ${(p) => (p.$stack ? "3px 0 0 -1px #24405f, 4px 0 0 -1px #7c94ac, 6px 0 0 -1px #24405f, 7px 0 0 -1px #7c94ac" : "none")};
  margin-right: ${(p) => (p.$stack ? "8px" : "0")};
  background: ${(p) =>
    p.$active
      ? "linear-gradient(135deg, #d4dce8, #8894a8 45%, #b8c0cc)"
      : "linear-gradient(150deg, #a4b4c6, #50688a 40%, #24446c 55%, #3c5c84)"};
`;

const Tray = styled.div`
  margin-left: auto;
  display: flex;
  align-items: center;
`;

const TrayList = styled.div`
  display: flex;
  align-items: center;
  gap: 9px;
  margin-right: 9px;
`;

const Clock = styled.time`
  width: 76px;
  font: 12px/19px ${ui};
  text-align: center;
`;

const ShowDesktop = styled.button`
  width: 14px;
  height: 38px;
  border: 1px solid #8098b0;
  background: linear-gradient(#9cacbc, #2c4464 40%, #1c3454);
`;

const StartOrb = () => (
  <svg width="38" height="38" viewBox="0 0 38 38">
    <defs>
      <radialGradient id="orb" cx="50%" cy="80%">
        <stop offset="0" stopColor="#50d0f8" />
        <stop offset="0.6" stopColor="#1c5c98" />
        <stop offset="1" stopColor="#405870" />
      </radialGradient>
    </defs>
    <circle cx="19" cy="19" r="18" fill="url(#orb)" stroke="#88a8c0" />
    <path d="M4 14a16 14 0 0 1 30 0q-15 5-30 0z" fill="#c8dce8" opacity="0.5" />
    <path d="M10 12q4-3 9-1l-2 8q-4-2-8 0z" fill="#f06828" />
    <path d="M20 12q4 2 9 0l-2 8q-4 2-9 0z" fill="#90c830" />
    <path d="M9 20q4-2 8 0l-2 8q-4-2-8 0z" fill="#40a0e8" />
    <path d="M18 21q4 2 8 0l-2 7q-4 2-8 0z" fill="#fcc820" />
  </svg>
);

const TaskSvg = ({ children }) => (
  <svg width="34" height="34" viewBox="0 0 34 34" fill="none">
    {children}
  </svg>
);

const ShellIcon = () => (
  <TaskSvg>
    <path
      d="M9 28q-2-4-5-5Q0 18 2 13q1-5 5-6 3-5 8-4 5-2 9 2 5 1 6 6 3 4 0 8 0 5-4 7-3 6-8 6-5 0-9-4z"
      fill="#fcdc98"
      stroke="#d09840"
    />
    <path d="M12 27L4 14M13 26L9 7M14 26l2-22M16 25l8-19M17 26l12-13" stroke="#dca858" />
    <path d="M21 15l2 6 7 0-5 5 2 7-6-4-6 4 2-7-5-5 7 0z" fill="#f08828" stroke="#b05810" />
    <circle cx="21" cy="24" r="1.5" fill="#fcd888" />
  </TaskSvg>
);

const NotepadIcon = () => (
  <TaskSvg>
    <rect x="5" y="4" width="24" height="28" rx="2" fill="#e8f8ff" stroke="#88b8d0" />
    <path d="M8 9h18M8 13h18M8 17h18M8 21h18M8 25h18M8 29h18" stroke="#2878a8" strokeWidth="1.6" />
  </TaskSvg>
);

const GIcon = () => (
  <TaskSvg>
    <path
      d="M30 4L17 8 8 17 4 28l4 5h14l5-4 3-12H17l-2 5h7l-2 5h-8l-1-3 5-9 5-4 9-3z"
      fill="#e03020"
      stroke="#801008"
    />
  </TaskSvg>
);

const FloppyIcon = () => (
  <TaskSvg>
    <path d="M3 2h28v31H5l-2-2z" fill="#2830c0" stroke="#101060" />
    <path d="M10 2h14v11H10z" fill="#c8ccd8" />
    <path d="M18 4h4v7h-4z" fill="#2830c0" />
    <path d="M6 17h23v15H6z" fill="#fff" />
    <path d="M8 20h19M8 24h19M8 28h9" stroke="#d04040" />
    <text x="18" y="31" fill="#222" fontSize="8" fontFamily="Liberation Mono" fontWeight="bold">
      64
    </text>
  </TaskSvg>
);

const PIcon = () => (
  <TaskSvg>
    <path d="M3 27L6 2h17v9" stroke="#28703c" />
    <path
      d="M14 13q4-4 11-3 6 2 5 8-2 8-11 8h-3l-2 7H8l5-14h3l-1 3h3q4 0 4-4 0-3-4-3h-4z"
      fill="#188838"
    />
  </TaskSvg>
);

const BirdIcon = () => (
  <TaskSvg>
    <rect x="3" y="3" width="28" height="29" rx="6" fill="#1890f8" />
    <path d="M10 7q11 4 15 11l-3 1 3 4-8 8 2-6-4-1 2-2q-5-2-6-6l4 1q-4-4-5-10z" fill="#fff" />
  </TaskSvg>
);

const OfficeIcon = ({ letter, color, grid }) => (
  <TaskSvg>
    <path d="M4 6q8-3 17-2l4 22q-10-1-21 3z" fill="#e8f0f8" stroke={color} />
    <path d="M12 5l19 2-3 26-19-3z" fill="#fff" stroke={color} />
    {grid ? (
      <path d="M20 14l9 1M20 20l8 1M12 25l16 2M20 21l-1 10M25 9l-2 22" stroke={color} strokeWidth="2" />
    ) : (
      <path d="M23 11l6 1M22 15l6 1M21 19l6 1M13 23l13 2M13 27l13 2" stroke={color} strokeWidth="1.5" />
    )}
    <text x="8" y="21" fill={color} fontSize="15" fontWeight="bold" fontStyle="italic" fontFamily="Liberation Serif">
      {letter}
    </text>
  </TaskSvg>
);

const DiscIcon = () => (
  <TaskSvg>
    <path d="M2 18l6 10" stroke="#dde" strokeWidth="2" />
    <ellipse cx="20" cy="19" rx="12" ry="11" fill="#687890" />
    <ellipse cx="20" cy="17" rx="12" ry="10" fill="#28a8a0" stroke="#106868" />
    <path d="M9 20q4 7 12 6M31 14q-3-5-8-6" stroke="#e0e070" strokeWidth="1.5" />
    <ellipse cx="20" cy="17" rx="5" ry="4" fill="#0c6c68" stroke="#f0e060" strokeWidth="1.5" />
    <path d="M2 5l5-3 7 4-3 4-7-1z" fill="#20c0b8" stroke="#087070" />
  </TaskSvg>
);

const BigXIcon = () => (
  <TaskSvg>
    <path d="M31 2L4 32" stroke="#fff" strokeWidth="3" />
    <path d="M31 2L4 32" stroke="#400848" strokeWidth="1.5" />
    <path d="M3 2h7l21 31h-8z" fill="#800888" stroke="#fff" />
  </TaskSvg>
);

const TrayIcons = () => (
  <TrayList>
    <svg width="16" height="16" viewBox="0 0 16 16" fill="none">
      <path d="M3 4q0-2 4-1t6-2" stroke="#b8b8b0" />
      <rect x="0.5" y="6.5" width="15" height="8" rx="1" fill="#e0e0d8" stroke="#888" />
      <path d="M2 9h12M2 11h12M4 13h8" stroke="#707068" strokeDasharray="1 1" />
    </svg>
    <svg width="16" height="16" viewBox="0 0 16 16">
      <circle cx="8" cy="8" r="7.5" fill="#1828b8" stroke="#c0c8f0" />
      <text x="8" y="12" textAnchor="middle" fill="#fff" fontFamily="Liberation Sans" fontWeight="bold" fontSize="12">
        ?
      </text>
    </svg>
    <svg width="10" height="20" viewBox="0 0 10 20" fill="none" stroke="#fff">
      <path d="M3 3V1h6v4H7M1 3h6v4H1z" />
      <path d="M2 15h6l-3 3z" fill="#fff" stroke="none" />
    </svg>
    <svg width="8" height="5" viewBox="0 0 8 5">
      <path d="M0 5l4-5 4 5z" fill="#fff" />
    </svg>
    <svg width="16" height="16" viewBox="0 0 16 16">
      <path d="M2 1v15" stroke="#fff" strokeWidth="1.5" />
      <path d="M3 2q3-1 5 0t6 0v7H3z" fill="#fff" />
      <circle cx="11" cy="11" r="4.5" fill="#d02818" />
      <path d="M9 9l4 4M13 9l-4 4" stroke="#fff" strokeWidth="1.4" />
    </svg>
    <svg width="16" height="16" viewBox="0 0 16 16" fill="none" stroke="#fff">
      <path d="M1 5h2l4-4v14l-4-4H1z" fill="#fff" />
      <path d="M9 6q1 2 0 4M11 4q3 4 0 8M13 2q4 6 0 12" />
    </svg>
    <svg width="16" height="16" viewBox="0 0 16 16" fill="none" stroke="#fff">
      <path d="M5 4h10v8H5zM8 12v3M5 15h8" strokeWidth="1.5" />
      <path d="M1 1v4h4V1M3 5v7h2" />
    </svg>
  </TrayList>
);

/* ---------- page data ---------- */

const orange = "#fec850";
const green = "#00a880";
const grey = "#9cb4bc";

const layerGroups = [
  [
    { name: "to", bg: "#fff" },
    { name: "ts", bg: green, color: "#449700", active: true },
  ],
  [{ name: "cs.etch", bg: pale }],
  ["cs", "sig2b", "sig3t", "sig4b", "sig5t", "sig6b", "sig7t"].map((name) => ({ name, bg: orange })),
  [{ name: "ss.etch", bg: pale }],
  [
    { name: "ss", bg: orange },
    { name: "bs", bg: green },
    { name: "bo", bg: "#fff" },
  ],
  [
    { name: "drl", bg: grey, color: "#f00" },
    ...["szdrl", "szdrl1-2", "szbz5-3b", "2rd", "2rd1"].map((name) => ({ name, bg: grey })),
    { name: "rout", bg: "#dcdcdc", color: "#0020ff" },
  ],
  ["roubk", "pthrou", "tp", "bp", "gdl", "datecode-pbc", "biaozhu"].map((name) => ({ name, bg: pale })),
];

// the second value is the position of the underlined letter
const menus = [
  ["File", 0],
  ["Edit", 0],
  ["Actions", 0],
  ["Options", 1],
  ["Analysis", -1],
  ["DFM", -1],
  ["Step", 0],
  ["Rout", 0],
  ["Windows", 0],
];

const App = () => (
  <Desktop>
    <GlobalStyle />
    <MainTitle>
      <XIcon />
      <TitleText>Graphic Editor 9.07b2 (00@HY-HYCAM-PC411 - Windows, pid:4468)</TitleText>
      <WinControls>
        <WinControl aria-label="Minimize">
          <svg width="12" height="10" viewBox="0 0 12 10">
            <path d="M1 6h10v3H1z" fill="#fff" stroke="#405060" strokeWidth="0.8" />
          </svg>
        </WinControl>
        <WinControl aria-label="Maximize">
          <svg width="12" height="10" viewBox="0 0 12 10">
            <path d="M2 2h8v6H2z" fill="none" stroke="#fff" strokeWidth="2" />
          </svg>
        </WinControl>
        <WinControl $close aria-label="Close">
          <CrossGlyph />
        </WinControl>
      </WinControls>
    </MainTitle>
    <AppArea>
      <Header>
        <MenuBar>
          {menus.map(([name, key]) => (
            <MenuItem key={name}>
              {key < 0 ? (
                name
              ) : (
                <>
                  {name.slice(0, key)}
                  <u>{name[key]}</u>
                  {name.slice(key + 1)}
                </>
              )}
            </MenuItem>
          ))}
          <MenuItem $end>Help</MenuItem>
        </MenuBar>
        <Brand>
          <Logo />
          <BrandName>
            <Product>Genesis 2000</Product>
            <ProductPart>Graphic Editor</ProductPart>
          </BrandName>
          <BrandDate>
            02 Aug 2023
            <br />
            06:16 PM
          </BrandDate>
        </Brand>
      </Header>
      <Middle>
        <Sidebar>
          <JobLine>Job : 8g15c02wa0</JobLine>
          <JobLine $gap>Step: cam</JobLine>
          <MatrixBox>
            <MatrixButton>Job Matrix ...</MatrixButton>
          </MatrixBox>
          <LayerWell>
            <LayerList>
              {layerGroups.map((group, index) => (
                <LayerGroup key={index}>
                  {group.map((layer) => (
                    <LayerRow key={layer.name}>
                      <LayerTick type="checkbox" id={layer.name} $active={layer.active} />
                      <LayerSwatch $color={layer.color} />
                      <LayerName htmlFor={layer.name} $bg={layer.bg}>
                        {layer.name}
                        {layer.active && (
                          <svg width="7" height="7" viewBox="0 0 7 7">
                            <path d="M0 0h6v7H0z" />
                            <path d="M1 1h1v2H1zM4 1h1v2H4zM1 4h1v2H1zM4 4h1v2H4z" fill="#fff" />
                          </svg>
                        )}
                      </LayerName>
                    </LayerRow>
                  ))}
                </LayerGroup>
              ))}
            </LayerList>
            <LayerTrack />
          </LayerWell>
        </Sidebar>
        <Canvas>
          <Board />
          <Coordinates>{'X = 6.530376"\nY = 2.953866"'}</Coordinates>
        </Canvas>
      </Middle>
      <PromptRow>
        <Prompt>ner</Prompt>
        <UnitBox>
          <OptionBox $bg={teal} $teal>
            <OptionSelect aria-label="Units">
              <option>Inch</option>
            </OptionSelect>
          </OptionBox>
        </UnitBox>
      </PromptRow>
      <StatusLine>sig3t,#1219,Surface,XC=5.1560906,YC=0.3675228,Islands=1,Holes=0,POS</StatusLine>
    </AppArea>
    <Taskbar>
      <StartButton aria-label="Start">
        <StartOrb />
      </StartButton>
      <TaskButton><ShellIcon /></TaskButton>
      <TaskButton><NotepadIcon /></TaskButton>
      <TaskButton><GIcon /></TaskButton>
      <TaskButton><FloppyIcon /></TaskButton>
      <TaskButton><PIcon /></TaskButton>
      <TaskButton><BirdIcon /></TaskButton>
      <TaskButton $w="50px" $stack><OfficeIcon letter="W" color="#2858a0" /></TaskButton>
      <TaskButton $w="50px" $stack><OfficeIcon letter="X" color="#388038" grid /></TaskButton>
      <TaskButton><DiscIcon /></TaskButton>
      <TaskButton $w="50px" $active $stack><BigXIcon /></TaskButton>
      <TaskButton><DiscIcon /></TaskButton>
      <Tray>
        <TrayIcons />
        <Clock>
          18:42
          <br />
          2023/8/2
        </Clock>
        <ShowDesktop aria-label="Show desktop" />
      </Tray>
    </Taskbar>
    <ChecklistEditor />
    <ResultsHistogram />
    <ResultsViewer />
  </Desktop>
);

export default App;
